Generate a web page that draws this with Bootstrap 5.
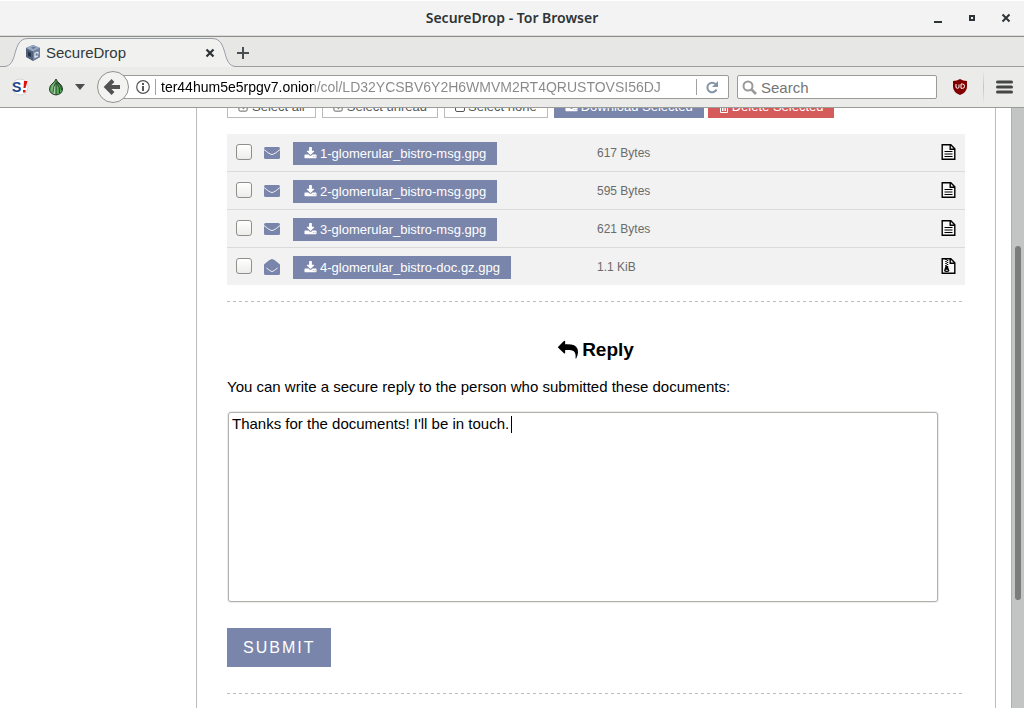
<!DOCTYPE html>
<html lang="en">
<head>
<meta charset="utf-8">
<meta name="viewport" content="width=device-width, initial-scale=1">
<title>SecureDrop - Tor Browser</title>
<link rel="stylesheet" href="https://cdn.jsdelivr.net/npm/bootstrap@5.3.0/dist/css/bootstrap.min.css">
<style>
  body { font-family: "Liberation Sans", Arial, sans-serif; font-size: 15px; line-height: 20px; color: #000; background: #fff; }
  svg { display: block; flex: none; }
  button { font-family: inherit; }

  .titlebar { height: 37px; background: #f3f3f3; border-bottom: 1px solid #8d8d89; box-shadow: inset 0 1px #fff, inset 0 -1px #dcdcda; font: 600 14px/36px "Noto Sans", sans-serif; color: #2e3436; display: grid; grid-template-columns: 1fr auto 1fr; }
  .chrome-btn { border: 0; background: none; padding: 0; color: #2e3436; }
  .window-buttons { gap: 22px; padding-right: 12px; }

  .tabstrip { height: 30px; background: linear-gradient(#9e9e9a, #9e9e9a) bottom / 100% 1px no-repeat #e7e7e5; }
  .tab-body { width: 184px; height: 29px; margin-top: 1px; border-top: 1px solid #989da6; background: #f1f1f0; color: #33393b; }
  .tab-body svg { position: relative; z-index: 1; }
  .favicon { margin: 0 4px 0 -4px; }
  .tab-close { margin-right: -4px; }
  .tab-edge { margin-top: 1px; }
  .new-tab { margin-left: -3px; }

  .toolbar { height: 41px; padding-right: 3px; background: #ebebe9; border-bottom: 1px solid #9b9b97; }
  .back { width: 32px; height: 32px; border: 1px solid #92928e; border-radius: 50%; background: #f3f3f1; z-index: 1; }
  .address { height: 24px; margin-left: -10px; padding-left: 16px; border: 1px solid #9b9b97; border-radius: 2px; background: #fff; }
  .rule { width: 1px; height: 16px; margin: 0 5px; background: #a0a0a0; }
  .url { border: 0; outline: 0; padding: 0; min-width: 0; height: 22px; font-size: 14px; color: #888; background: linear-gradient(90deg, #000 153px, #888 153px); -webkit-background-clip: text; background-clip: text; -webkit-text-fill-color: transparent; }
  .search { width: 200px; height: 24px; border: 1px solid #9b9b97; border-radius: 2px; background: #fff; }
  .search input { border: 0; outline: 0; padding: 0; min-width: 0; height: 22px; font-size: 15px; background: none; }
  .search input::placeholder { color: #757575; opacity: 1; }
  .menu-rule { width: 1px; height: 34px; background: linear-gradient(transparent, #c4c4c2, transparent); }

  .viewport { min-height: 0; }
  .page { padding: 0 15px 0 196px; min-width: 0; }
  .sheet { border: solid #bcbcbc; border-width: 0 1px; padding: 0 30px; display: flow-root; }
  .bulk { margin-top: -13px; gap: 6px; }
  .tool { height: 23px; border-radius: 0; border: 1px solid #bababa; padding: 0 10px; font-size: 13px; line-height: 21px; color: #555; background: #fff; display: flex; align-items: center; gap: 3px; white-space: nowrap; }
  .tool.solid { color: #fff; background: #7a85ab; border-color: #7a85ab; }
  .tool.danger { color: #fff; background: #d55b5b; border-color: #d55b5b; margin-left: -2px; }
  .files { margin: 16px 0; background: #f2f2f2; }
  .files li { min-height: 38px; padding: 8px 9px 6px; border-bottom: 1px solid #dadada; color: #6b6b6b; font-size: 12px; display: flex; }
  .files li:last-child { border: 0; min-height: 37px; }
  .pick { appearance: none; width: 16px; height: 16px; margin: 2px 12px 0 0; border: 1px solid #8e8e8a; border-radius: 3px; background: linear-gradient(#fff, #ececea); flex: none; }
  .name-cell { width: 304px; margin-left: 13px; }
  .mail { color: #7a85ab; margin-top: 3px; }
  .kind { margin-top: 2px; }
  .size { line-height: 23px; }
  .dashes { margin: 0; border: 0; height: 1px; opacity: 1; background: repeating-linear-gradient(90deg, #bdbdbd 0 3px, transparent 3px 6px); }
  h3 { font-size: 19px; line-height: 24px; font-weight: 700; margin: 36px 0 15px; }
  .prompt { display: block; margin-bottom: 15px; }
  .answer { width: calc(100% - 28px); height: 190px; border: 1px solid #b0b0ac; box-shadow: 0 0 0 1px #ececea; border-radius: 3px; padding: 2px 3px; line-height: 18px; resize: none; outline: 0; display: block; margin-left: 1px; }
  .caret-bar { position: absolute; left: 284px; top: 4px; width: 1px; height: 17px; background: #000; }
  .send { border: 0; background: #7a85ab; color: #fff; height: 39px; padding: 0 16px; font-size: 16px; letter-spacing: 2px; margin: 26px 0; }
  .scroll { width: 13px; background: #c3c5c4; border-left: 1px solid #b0b0ad; }
  .thumb { width: 6px; height: 59%; border-radius: 3px; background: #7a7c7b; }
</style>
</head>
<body class="vh-100 overflow-hidden d-flex flex-column">

<svg width="0" height="0" class="position-absolute" aria-hidden="true">
  <symbol id="download" viewBox="0 0 1792 1792"><path fill="currentColor" d="M1344 1344q0-26-19-45t-45-19-45 19-19 45 19 45 45 19 45-19 19-45zm256 0q0-26-19-45t-45-19-45 19-19 45 19 45 45 19 45-19 19-45zm128-224v320q0 40-28 68t-68 28h-1472q-40 0-68-28t-28-68v-320q0-40 28-68t68-28h465l135 136q58 56 136 56t136-56l136-136h464q40 0 68 28t28 68zm-325-569q17 41-14 70l-448 448q-18 19-45 19t-45-19l-448-448q-31-29-14-70 17-39 59-39h256v-448q0-26 19-45t45-19h256q26 0 45 19t19 45v448h256q42 0 59 39z"/></symbol>
  <symbol id="envelope" viewBox="0 0 16 16"><rect y="2" width="16" height="12" rx="1.500" fill="currentColor"/><path d="M0 4.500C3 7 6 9.500 8 9.500S13 7 16 4.500" fill="none" stroke="#f2f2f2"/></symbol>
  <symbol id="opened" viewBox="0 0 16 16"><path fill="currentColor" d="M0 5.500C2 4 6 0 8 0s6 4 8 5.500v9q0 1.500-1.500 1.500h-13Q0 16 0 14.500z"/><path d="M2.500 9C5 11 7 12.500 8 12.500S11 11 13.500 9" fill="none" stroke="#f2f2f2"/></symbol>
  <symbol id="doc" viewBox="0 0 14 16"><path d="M.7.700h8.600l4 4v10.600H.7zM8.700.700v4.600h4.600" fill="#f8f8f8" stroke="#000" stroke-width="1.400"/><path d="M3 7.500h8M3 10h8M3 12.500h8" stroke="#000"/></symbol>
  <symbol id="archive" viewBox="0 0 14 16"><path d="M.7.700h8.600l4 4v10.600H.7zM8.700.700v4.600h4.600" fill="#f8f8f8" stroke="#000" stroke-width="1.400"/><path d="M4.500 1v8M6 2v8" stroke="#000" stroke-width="1.500" stroke-dasharray="1 1"/><path d="M4 8h2.300l1.500 4.500q0 1.500-2.600 1.500t-2.600-1.500z"/><path d="M4.200 12.300h2" stroke="#f2f2f2"/></symbol>
  <symbol id="checked" viewBox="0 0 12 12"><path d="M10 6v3q0 1.500-1.500 1.500h-6Q1 10.500 1 9V3.500Q1 2 2.500 2H8M3.500 5.500L6 8l5-5" fill="none" stroke="currentColor"/></symbol>
</svg>

<header class="titlebar flex-shrink-0">
  <span></span>
  <span>SecureDrop - Tor Browser</span>
  <span class="window-buttons d-flex justify-content-end align-items-center">
    <button class="chrome-btn" aria-label="Minimize"><svg width="12" height="12"><path d="M2 9h8v2H2z" fill="#2e3436"/></svg></button>
    <button class="chrome-btn" aria-label="Maximize"><svg width="12" height="12"><path d="M4 4h4v4H4z" fill="none" stroke="#2e3436" stroke-width="2"/></svg></button>
    <button class="chrome-btn" aria-label="Close"><svg width="12" height="12"><path d="M2.500 2.500l7 7m0-7l-7 7" stroke="#2e3436" stroke-width="2"/></svg></button>
  </span>
</header>

<nav class="tabstrip d-flex flex-shrink-0">
  <svg class="tab-edge" width="28" height="29"><path d="M0 28.500h4C19 28.500 11 .500 28 .500V29H0z" fill="#f1f1f0"/><path d="M0 28.500h4C19 28.500 11 .500 28 .500" fill="none" stroke="#989da6"/></svg>
  <div class="tab-body d-flex align-items-center">
    <svg class="favicon" width="18" height="16" viewBox="0 0 18 16"><path d="M9 0l7 3v9l-7 4-7-4V3z" fill="#526078"/><path d="M9 0l7 3-7 3.500L2 3z" fill="#9aabc8"/><path d="M9 6.500L16 3v9l-7 4z" fill="#71829f"/><path d="M4 6.500l3 1.500v4L4 10.500z" fill="#27324a"/><path d="M14 7l-3 1.200v4l3-1.400M14 9.200v-2" fill="none" stroke="#dde3ee" stroke-width="1.300"/><path d="M7 2.800l3-1 2 1-3 1.200z" fill="#62728f"/></svg>
    <span class="flex-fill">SecureDrop</span>
    <button class="chrome-btn tab-close" aria-label="Close tab"><svg width="12" height="12"><path d="M2.500 2.500l7 7m0-7l-7 7" stroke="#2e3436" stroke-width="2.200"/></svg></button>
  </div>
  <svg class="tab-edge" width="28" height="29"><path d="M0 .500C17 .500 9 28.500 24 28.500h4v.500H0z" fill="#f1f1f0"/><path d="M0 .500C17 .500 9 28.500 24 28.500h4" fill="none" stroke="#989da6"/></svg>
  <button class="chrome-btn new-tab" aria-label="New tab"><svg width="12" height="14"><path d="M0 8h12M6 2v12" stroke="#4a4e50" stroke-width="2"/></svg></button>
</nav>

<div class="toolbar d-flex align-items-center flex-shrink-0">
  <button class="chrome-btn ms-2 ps-1" aria-label="NoScript"><svg width="17" height="18"><circle cx="8" cy="9" r="8" fill="#fff" stroke="#d6d6d6"/><text x="0" y="14" font-family="Liberation Sans" font-weight="700" font-size="14" fill="#1d4288">S</text><path d="M12 3h3.500l-2 7h-2zM11 12h2.500v2.500H11z" fill="#e01010"/></svg></button>
  <button class="chrome-btn ms-3 ps-1" aria-label="Torbutton"><svg width="14" height="18"><path d="M7 1q1 2.500 3 4 3.500 2.500 3.500 6 0 5-6.500 6Q.5 16 .5 11 .5 7.500 4 5q2-1.500 3-4z" fill="#4fb057" stroke="#2a3a2a"/><path d="M7 3v13.500q-4.500-1-4.500-5.500 0-3 2.500-5z" fill="#a3cf9d"/><path d="M7 3v14M6.500 5q-3 4-2.500 9.500M7.500 5q4 4 3 10M8 4q5 4 4.500 8" fill="none" stroke="#2a3a2a"/></svg></button>
  <button class="chrome-btn ms-2 ps-1" aria-label="Torbutton menu"><svg width="10" height="6"><path d="M0 0h10L5 6z" fill="#4a4e50"/></svg></button>
  <div class="d-flex align-items-center flex-fill ps-2 ms-1">
    <button class="back chrome-btn position-relative flex-shrink-0" aria-label="Back"><svg width="30" height="30"><path d="M22 15H10M15 8.500L8.500 15l6.500 6.500" fill="none" stroke="#505254" stroke-width="4"/></svg></button>
    <div class="address d-flex align-items-center flex-fill">
      <svg width="14" height="14"><circle cx="7" cy="7" r="6.300" fill="none" stroke="#555" stroke-width="1.200"/><path d="M6 6h2v5H6zM6 3h2v2H6z" fill="#555"/></svg>
      <span class="rule"></span>
      <input class="url flex-fill" aria-label="Address" value="ter44hum5e5rpgv7.onion/col/LD32YCSBV6Y2H6WMVM2RT4QRUSTOVSI56DJ">
      <span class="rule ms-4 me-2"></span>
      <button class="chrome-btn me-2" aria-label="Reload"><svg width="15" height="14"><path d="M11.500 9.500A4.800 4.800 0 1 1 10.500 4" fill="none" stroke="#8495a8" stroke-width="2"/><path d="M13 1v6H7z" fill="#8495a8"/></svg></button>
    </div>
  </div>
  <div class="search d-flex align-items-center ms-2 ps-1 gap-1">
    <svg width="15" height="15"><circle cx="6" cy="6" r="4.500" fill="none" stroke="#999" stroke-width="2"/><path d="M9 9l5 5" stroke="#999" stroke-width="2.600"/></svg>
    <input class="flex-fill" type="search" aria-label="Search" placeholder="Search">
  </div>
  <button class="chrome-btn ms-3" aria-label="uBlock Origin"><svg width="14" height="16"><path d="M7 0q3 2 7 2v6q0 5-7 8-7-3-7-8V2q4 0 7-2z" fill="#800000"/><path d="M3 5v3q0 1.300 1.500 1.300T6 8V5.500M8 9.300V5h1.500Q11.500 5 11.500 7.200T9.500 9.300z" fill="none" stroke="#fff"/></svg></button>
  <span class="menu-rule ms-3 me-2"></span>
  <button class="chrome-btn ms-1 me-2" aria-label="Menu"><svg width="17" height="14"><path d="M1.500 2h14M1.500 7h14M1.500 12h14" stroke="#444746" stroke-width="3" stroke-linecap="round"/></svg></button>
</div>

<div class="viewport d-flex flex-fill overflow-hidden">
  <main class="page flex-fill">
    <div class="sheet h-100">
      <div class="bulk d-flex">
        <button class="tool"><svg width="11" height="12"><use href="#checked"/></svg>Select all</button>
        <button class="tool"><svg width="11" height="12"><use href="#checked"/></svg>Select unread</button>
        <button class="tool"><svg width="10" height="12"><rect x=".5" y="2.500" width="9" height="8" rx="1.500" fill="none" stroke="currentColor"/></svg>Select none</button>
        <button class="tool solid"><svg width="13" height="13"><use href="#download"/></svg>Download Selected</button>
        <button class="tool danger"><svg width="10" height="12"><path d="M0 2.500h10M3 2V.500h4V2M1.500 3v8.500h7V3M3.500 5v5M5 5v5M6.500 5v5" fill="none" stroke="currentColor"/></svg>Delete Selected</button>
      </div>

      <ul class="files list-unstyled">
        <li>
          <input class="pick" type="checkbox" aria-label="Select 1-glomerular_bistro-msg.gpg">
          <svg class="mail" width="16" height="16"><use href="#envelope"/></svg>
          <div class="name-cell d-flex"><button class="tool solid"><svg width="13" height="13"><use href="#download"/></svg>1-glomerular_bistro-msg.gpg</button></div>
          <span class="size flex-fill">617 Bytes</span>
          <svg class="kind" width="15" height="16"><use href="#doc"/></svg>
        </li>
        <li>
          <input class="pick" type="checkbox" aria-label="Select 2-glomerular_bistro-msg.gpg">
          <svg class="mail" width="16" height="16"><use href="#envelope"/></svg>
          <div class="name-cell d-flex"><button class="tool solid"><svg width="13" height="13"><use href="#download"/></svg>2-glomerular_bistro-msg.gpg</button></div>
          <span class="size flex-fill">595 Bytes</span>
          <svg class="kind" width="15" height="16"><use href="#doc"/></svg>
        </li>
        <li>
          <input class="pick" type="checkbox" aria-label="Select 3-glomerular_bistro-msg.gpg">
          <svg class="mail" width="16" height="16"><use href="#envelope"/></svg>
          <div class="name-cell d-flex"><button class="tool solid"><svg width="13" height="13"><use href="#download"/></svg>3-glomerular_bistro-msg.gpg</button></div>
          <span class="size flex-fill">621 Bytes</span>
          <svg class="kind" width="15" height="16"><use href="#doc"/></svg>
        </li>
        <li>
          <input class="pick" type="checkbox" aria-label="Select 4-glomerular_bistro-doc.gz.gpg">
          <svg class="mail" width="16" height="16"><use href="#opened"/></svg>
          <div class="name-cell d-flex"><button class="tool solid"><svg width="13" height="13"><use href="#download"/></svg>4-glomerular_bistro-doc.gz.gpg</button></div>
          <span class="size flex-fill">1.1 KiB</span>
          <svg class="kind" width="15" height="16"><use href="#archive"/></svg>
        </li>
      </ul>

      <hr class="dashes">
      <h3 class="d-flex justify-content-center align-items-center gap-1">
        <svg width="20" height="20" viewBox="0 0 1792 1792"><path transform="matrix(-1 0 0 1 1792 0)" d="M1792 640q0 26-19 45l-512 512q-19 19-45 19t-45-19-19-45v-256h-224q-98 0-175.500 6t-154 21.500-133 42.500-105.500 69.500-80 101-48.500 138.500-17.500 181q0 55 5 123 0 6 2.500 23.500t2.500 26.500q0 15-8.500 25t-23.500 10q-16 0-28-17-7-9-13-22t-13.500-30-10.500-24q-127-285-127-451 0-199 53-333 162-403 875-403h224v-256q0-26 19-45t45-19 45 19l512 512q19 19 19 45z"/></svg>
        Reply
      </h3>
      <form>
        <label class="prompt" for="message">You can write a secure reply to the person who submitted these documents:</label>
        <div class="position-relative">
          <textarea class="answer" id="message">Thanks for the documents! I'll be in touch.</textarea>
          <span class="caret-bar"></span>
        </div>
        <button class="send" type="button">SUBMIT</button>
      </form>
      <hr class="dashes">
    </div>
  </main>
  <div class="scroll d-flex flex-column align-items-center flex-shrink-0">
    <div class="h-100 d-flex flex-column" aria-hidden="true">
      <div style="height:23%"></div>
      <div class="thumb"></div>
    </div>
  </div>
</div>

<script src="https://cdn.jsdelivr.net/npm/bootstrap@5.3.0/dist/js/bootstrap.bundle.min.js"></script>
</body>
</html>
